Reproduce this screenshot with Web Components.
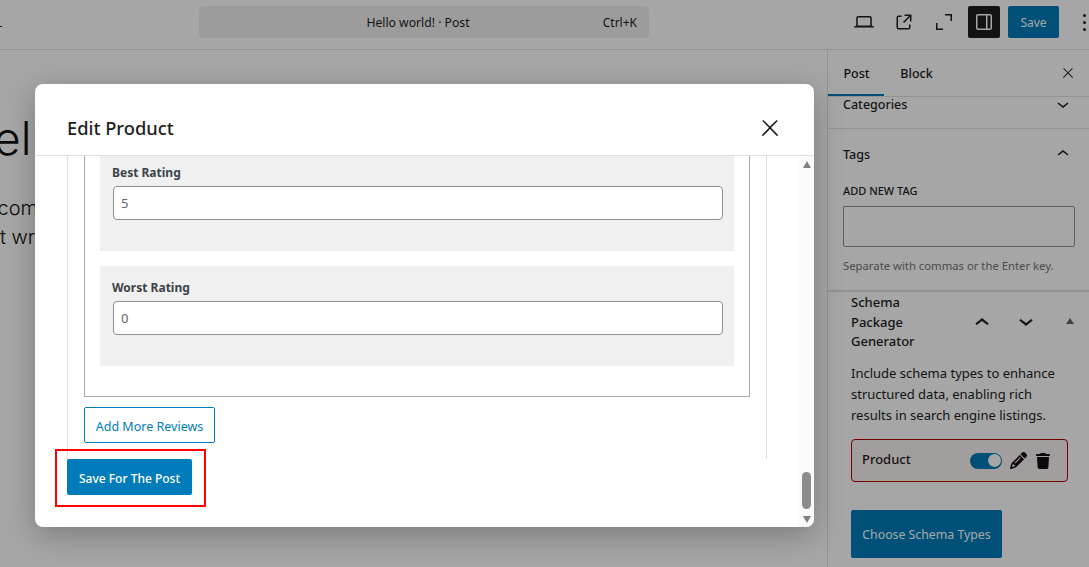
<!DOCTYPE html>
<html>
<head>
<meta charset="utf-8">
<title>Edit Product</title>
<style>
  html, body { margin: 0; padding: 0; height: 100%; overflow: hidden; background: #fff; }
  body { font-family: "Noto Sans", "Open Sans", sans-serif; font-size: 13px; color: #1e1e1e; }
  editor-shell { width: 1089px; height: 567px; }
</style>
</head>
<body>
<editor-shell>
  <editor-topbar slot="top" title-text="Hello world! · Post"></editor-topbar>
  <editor-canvas slot="canvas"></editor-canvas>
  <editor-sidebar slot="side"></editor-sidebar>
  <edit-modal slot="modal" heading="Edit Product">
    <rating-field label="Best Rating" class="first">5</rating-field>
    <rating-field label="Worst Rating">0</rating-field>
  </edit-modal>
</editor-shell>

<script>
const ICONS = {
  laptop: '<path d="M20.5 16h-.7V8c0-1.1-.9-2-2-2H6.2c-1.1 0-2 .9-2 2v8h-.7c-.8 0-1.5.7-1.5 1.5h20c0-.8-.7-1.5-1.5-1.5zM5.7 8c0-.3.2-.5.5-.5h11.6c.3 0 .5.2.5.5v7.6H5.7V8z"/>',
  external: '<path d="M19.5 4.5h-7V6h4.44l-5.97 5.97 1.06 1.06L18 7.06v4.44h1.5v-7Zm-13 1a2 2 0 0 0-2 2v10a2 2 0 0 0 2 2h10a2 2 0 0 0 2-2v-3H17v3a.5.5 0 0 1-.5.5h-10a.5.5 0 0 1-.5-.5v-10a.5.5 0 0 1 .5-.5h3V5.5h-3Z"/>',
  fullscreen: '<path d="M13 5.5h5.5V11H20V4h-7zM11 18.5H5.500V13H4v7h7z"/>',
  sidebar: '<path d="M18 4H6c-1.1 0-2 .9-2 2v12c0 1.1.9 2 2 2h12c1.1 0 2-.9 2-2V6c0-1.100-.9-2-2-2zm-4 14.500H6c-.3 0-.5-.2-.5-.5V6c0-.3.2-.5.5-.5h8v13zm4.500-.5c0 .3-.2.500-.5.500h-2.500v-13H18c.3 0 .5.2.5.5v12z"/>',
  close: '<path d="M13 11.800l6.100-6.300-1-1-6.100 6.200-6.100-6.200-1 1 6.100 6.300-6.500 6.700 1 1 6.500-6.600 6.500 6.600 1-1z"/>',
  up: '<path d="M6.500 12.400L12 8l5.500 4.400-.9 1.200L12 10l-4.500 3.600-1-1.200z"/>',
  down: '<path d="M17.500 11.600L12 16l-5.500-4.400.9-1.200L12 14l4.500-3.600 1 1.200z"/>'
};

function icon(name, size) {
  return `<svg width="${size}" height="${size}" viewBox="0 0 24 24" fill="currentColor" aria-hidden="true">${ICONS[name]}</svg>`;
}

class EditorShell extends HTMLElement {
  constructor() {
    super();
    this.attachShadow({ mode: 'open' }).innerHTML = `
      <style>
        :host { display: grid; grid-template-columns: 827px 262px; grid-template-rows: 50px 517px; position: relative; overflow: hidden; }
        .top { grid-column: 1 / 3; min-width: 0; }
        .scrim { position: absolute; inset: 0; background: rgba(0, 0, 0, .35); padding: 84px 275px 40px 35px; box-sizing: border-box; display: flex; }
      </style>
      <div class="top"><slot name="top"></slot></div>
      <slot name="canvas"></slot>
      <slot name="side"></slot>
      <div class="scrim"><slot name="modal"></slot></div>
    `;
  }
}

class EditorTopbar extends HTMLElement {
  constructor() {
    super();
    const title = this.getAttribute('title-text');
    this.attachShadow({ mode: 'open' }).innerHTML = `
      <style>
        :host { display: flex; align-items: center; height: 50px; box-sizing: border-box; border-bottom: 1px solid #e0e0e0; background: #fff; position: relative; padding-bottom: 5px; }
        .stub { width: 2px; height: 1.500px; background: #1e1e1e; margin: 9px 0 0 0; }
        .command { width: 450px; height: 32px; margin-left: 197px; padding-right: 12px; box-sizing: border-box; background: #f0f0f0; border-radius: 4px; display: grid; grid-template-columns: 1fr auto 1fr; align-items: center; font-size: 12px; color: #1e1e1e; }
        .command span { grid-column: 2; font-size: 12.200px; }
        .command kbd { grid-column: 3; justify-self: end; font: inherit; }
        .tools { display: flex; align-items: center; margin-left: 199px; color: #1e1e1e; }
        .tool { width: 32px; height: 32px; display: flex; align-items: center; justify-content: center; }
        .tool + .tool { margin-left: 8px; }
        .tool.on { background: #1e1e1e; color: #fff; border-radius: 2px; }
        .save { margin-left: 8px; height: 32px; width: 51px; background: #007cba; color: #fff; border-radius: 2px; font-size: 12px; display: flex; align-items: center; justify-content: center; }
        .more { margin-left: 24px; display: flex; flex-direction: column; gap: 4px; }
        .more i { width: 3px; height: 3px; border-radius: 50%; background: #1e1e1e; display: block; }
      </style>
      <div class="stub"></div>
      <div class="command"><span>${title}</span><kbd>Ctrl+K</kbd></div>
      <div class="tools">
        <div class="tool">${icon('laptop', 24)}</div>
        <div class="tool">${icon('external', 24)}</div>
        <div class="tool">${icon('fullscreen', 24)}</div>
        <div class="tool on">${icon('sidebar', 24)}</div>
        <div class="save">Save</div>
        <div class="more"><i></i><i></i><i></i></div>
      </div>
    `;
  }
}

class EditorCanvas extends HTMLElement {
  constructor() {
    super();
    this.attachShadow({ mode: 'open' }).innerHTML = `
      <style>
        :host { display: block; overflow: hidden; background: #fff; white-space: nowrap; font-family: "Inter", "Noto Sans", sans-serif; color: #111; font-weight: 300; }
        h1 { font-size: 46px; font-weight: 300; margin: 58px 0 0 -40px; line-height: 60px; }
        p { font-size: 20px; line-height: 29px; margin: 0 0 0 -37px; }
        p.one { margin-top: 26px; }
        p.two { margin-left: -35px; }
      </style>
      <h1>Hello world!</h1>
      <p class="one">Welcome to WordPress. This is your first post.</p>
      <p class="two">start writing!</p>
    `;
  }
}

class SidebarPanel extends HTMLElement {
  constructor() {
    super();
    const title = this.getAttribute('heading');
    const dir = this.getAttribute('dir-icon') || 'up';
    this.attachShadow({ mode: 'open' }).innerHTML = `
      <style>
        :host { display: block; border-bottom: 1px solid #e0e0e0; box-sizing: border-box; }
        .head { display: flex; justify-content: space-between; align-items: center; height: var(--head-height, 24px); padding: 0 14px 0 15px; font-weight: 500; font-size: 12.500px; }
        svg { display: block; }
        .body { padding: 0 14px 0 15px; }
      </style>
      <div class="head"><span>${title}</span>${icon(dir, 24)}</div>
      <div class="body"><slot></slot></div>
    `;
  }
}

class SchemaCard extends HTMLElement {
  constructor() {
    super();
    this.attachShadow({ mode: 'open' }).innerHTML = `
      <style>
        :host { display: flex; align-items: center; width: 217px; height: 43px; box-sizing: border-box; border: 1px solid #b30000; border-radius: 4px; background: #fbf3f3; padding: 0 0 0 10px; font-size: 13px; font-weight: 500; color: #1e1e1e; }
        .name { flex: 1; margin-top: -4px; }
        .toggle { width: 32px; height: 16px; border-radius: 8px; background: #007cba; display: flex; align-items: center; justify-content: flex-end; padding-right: 1px; box-sizing: border-box; }
        .toggle i { width: 13px; height: 13px; border-radius: 50%; background: #fff; display: block; }
        svg { display: block; }
        .pen { margin-left: 8px; }
        .bin { margin-left: 9px; margin-right: 17px; }
      </style>
      <span class="name"><slot></slot></span>
      <div class="toggle"><i></i></div>
      <svg class="pen" width="17" height="17" viewBox="0 0 512 512" fill="#111"><path d="M410.300 231l11.300-11.300-33.900-33.900-62.100-62.100L291.700 89.800l-11.300 11.300-22.600 22.600L58.600 322.900c-10.400 10.400-18 23.300-22.200 37.400L1 480.700c-2.500 8.400-.2 17.500 6.100 23.700s15.300 8.500 23.700 6.100l120.300-35.400c14.100-4.200 27-11.800 37.400-22.200L387.700 253.700 410.300 231zM160 399.400l-9.100 22.700c-4 3.100-8.500 5.400-13.300 6.900L59.400 452l23-78.100c1.400-4.900 3.800-9.400 6.900-13.300l22.700-9.100v32c0 8.800 7.200 16 16 16h32zM362.700 18.700L348.300 33.200 325.700 55.800 314.300 67.100l33.900 33.900 62.100 62.100 33.900 33.900 11.300-11.300 22.600-22.600 14.500-14.500c25-25 25-65.500 0-90.500L453.300 18.700c-25-25-65.500-25-90.500 0zm-47.400 168l-144 144c-6.200 6.200-16.400 6.200-22.600 0s-6.200-16.400 0-22.600l144-144c6.200-6.200 16.400-6.200 22.600 0s6.200 16.400 0 22.600z"/></svg>
      <svg class="bin" width="14" height="16" viewBox="0 0 448 512" fill="#111"><path d="M135.200 17.700L128 32H32C14.300 32 0 46.300 0 64S14.300 96 32 96H416c17.700 0 32-14.300 32-32s-14.300-32-32-32H320l-7.200-14.300C307.400 6.800 296.300 0 284.200 0H163.800c-12.100 0-23.200 6.800-28.600 17.700zM416 128H32L53.200 467c1.600 25.300 22.600 45 47.900 45H346.900c25.300 0 46.300-19.700 47.900-45L416 128z"/></svg>
    `;
  }
}

class EditorSidebar extends HTMLElement {
  constructor() {
    super();
    this.attachShadow({ mode: 'open' }).innerHTML = `
      <style>
        :host { display: block; border-left: 1px solid #e0e0e0; background: #fff; overflow: hidden; box-sizing: border-box; }
        .tabs { display: flex; height: 47px; border-bottom: 1px solid #e0e0e0; box-sizing: border-box; font-size: 12.500px; font-weight: 500; align-items: center; margin-left: -1px; }
        .tab { width: 57px; height: 46px; box-sizing: border-box; padding-left: 2px; display: flex; align-items: center; justify-content: center; }
        .tab + .tab { margin-left: 3px; }
        .tab.on { box-shadow: inset 0 -2px 0 #007cba; }
        .x { margin-left: auto; margin-right: 13px; display: block; height: 16px; }
        .cats { height: 32px; --head-height: 14px; }
        .tags { height: 163px; padding-top: 13px; border-bottom: 2px solid #e0e0e0; }
        .label { font-size: 11px; font-weight: 500; text-transform: uppercase; margin-top: 17px; line-height: 16px; }
        .input { width: 232px; height: 41px; box-sizing: border-box; border: 1px solid #949494; border-radius: 2px; margin-top: 7px; background: #fff; }
        .help { font-size: 11.300px; color: #757575; margin-top: 10px; line-height: 18px; white-space: nowrap; }
        .schema { padding: 0 0 0 23px; }
        .schema-head { display: flex; align-items: center; height: 58.500px; }
        .schema-head h2 { margin: 2px 0 0; font-size: 13px; font-weight: 500; line-height: 19.500px; width: 90px; flex: none; }
        .schema-head svg { display: block; }
        .schema-head .u { margin: 4px 0 0 27px; }
        .schema-head .d { margin: 0 0 1px 16px; }
        .tri { width: 0; height: 0; border-left: 4px solid transparent; border-right: 4px solid transparent; border-bottom: 6px solid #666; margin-left: 26px; }
        .desc { font-size: 13px; line-height: 21px; margin: 12px 0 13.500px; width: 225px; }
        .choose { width: 151px; height: 48px; background: #007cba; color: #fff; border-radius: 2px; margin-top: 28px; display: flex; align-items: center; justify-content: center; font-size: 12.300px; }
      </style>
      <div class="tabs">
        <div class="tab on">Post</div>
        <div class="tab">Block</div>
        <span class="x">${icon('close', 16)}</span>
      </div>
      <sidebar-panel class="cats" heading="Categories" dir-icon="down"></sidebar-panel>
      <sidebar-panel class="tags" heading="Tags">
        <div class="label">Add new tag</div>
        <div class="input"></div>
        <div class="help">Separate with commas or the Enter key.</div>
      </sidebar-panel>
      <div class="schema">
        <div class="schema-head">
          <h2>Schema Package Generator</h2>
          <span class="u"><svg width="28" height="28" viewBox="0 0 24 24" fill="#1e1e1e" stroke="#1e1e1e" stroke-width=".4">${ICONS.up}</svg></span>
          <span class="d"><svg width="28" height="28" viewBox="0 0 24 24" fill="#1e1e1e" stroke="#1e1e1e" stroke-width=".4">${ICONS.down}</svg></span>
          <span class="tri"></span>
        </div>
        <div class="desc">Include schema types to enhance structured data, enabling rich results in search engine listings.</div>
        <schema-card>Product</schema-card>
        <div class="choose">Choose Schema Types</div>
      </div>
    `;
  }
}

class RatingField extends HTMLElement {
  constructor() {
    super();
    const label = this.getAttribute('label');
    this.attachShadow({ mode: 'open' }).innerHTML = `
      <style>
        :host { display: block; background: #f0f0f0; height: 100px; box-sizing: border-box; padding: 14px 11px 0 12px; color: #3c434a; }
        :host(.first) { margin-top: -5px; }
        label { display: block; font-size: 12px; font-weight: 700; line-height: 16px; margin-bottom: 5px; }
        .box { height: 34px; margin-left: 1px; box-sizing: border-box; border: 1px solid #8c8f94; border-radius: 4px; background: #fff; font-size: 13px; color: #646970; padding: 0 7px; display: flex; align-items: center; }
      </style>
      <label>${label}</label>
      <div class="box"><slot></slot></div>
    `;
  }
}

class EditModal extends HTMLElement {
  constructor() {
    super();
    const heading = this.getAttribute('heading');
    this.attachShadow({ mode: 'open' }).innerHTML = `
      <style>
        :host { display: flex; flex-direction: column; flex: 1; background: #fff; border-radius: 8px; overflow: hidden; box-shadow: 0 8px 30px rgba(0,0,0,.25); min-width: 0; }
        header { height: 72px; box-sizing: border-box; border-bottom: 1px solid #e0e0e0; display: flex; align-items: center; justify-content: space-between; padding: 16px 31px 0 32px; flex: none; }
        h1 { margin: 0; font-size: 18.300px; font-weight: 500; color: #1e1e1e; }
        header svg { display: block; }
        .main { flex: 1; display: flex; min-height: 0; }
        .scroll { flex: 1; min-width: 0; padding-left: 32px; overflow: hidden; }
        .outer { width: 700px; height: 303px; box-sizing: border-box; border-left: 1px solid #ddd; border-right: 1px solid #ddd; padding: 0 16px; }
        .inner { width: 666px; height: 241px; box-sizing: border-box; border: 1px solid #aaa; border-top: 0; padding: 0 15px; display: flex; flex-direction: column; gap: 15px; overflow: hidden; }
        .add { margin-top: 10px; width: 131px; height: 36px; box-sizing: border-box; padding-top: 2px; border: 1px solid #007cba; border-radius: 2px; color: #007cba; font-size: 12.500px; display: flex; align-items: center; justify-content: center; }
        .mark { width: 151px; height: 58px; box-sizing: border-box; border: 2px solid #f00; margin: -10px 0 0 -12px; padding: 8px 0 0 10px; }
        .save { width: 125px; height: 36px; padding-top: 2px; box-sizing: border-box; background: #007cba; color: #fff; border-radius: 2px; font-size: 12px; font-weight: 500; display: flex; align-items: center; justify-content: center; }
        .bar { width: 15px; flex: none; background: #fafafa; display: flex; flex-direction: column; align-items: center; padding: 0 2px; box-sizing: border-box; }
        .ar { width: 0; height: 0; border-left: 4.500px solid transparent; border-right: 4.500px solid transparent; }
        .ar.u { border-bottom: 7px solid #7f7f7f; margin-top: 5px; }
        .thumb { width: 9px; height: 37px; background: #8c8c8c; border-radius: 5px; margin-top: auto; }
        .ar.d { border-top: 7px solid #7f7f7f; margin: 7px 0 4px; }
      </style>
      <header><h1>${heading}</h1>${icon('close', 26)}</header>
      <div class="main">
        <div class="scroll">
          <div class="outer">
            <div class="inner"><slot></slot></div>
            <div class="add">Add More Reviews</div>
          </div>
          <div class="mark"><div class="save">Save For The Post</div></div>
        </div>
        <div class="bar"><span class="ar u"></span><span class="thumb"></span><span class="ar d"></span></div>
      </div>
    `;
  }
}

customElements.define('sidebar-panel', SidebarPanel);
customElements.define('schema-card', SchemaCard);
customElements.define('rating-field', RatingField);
customElements.define('editor-topbar', EditorTopbar);
customElements.define('editor-canvas', EditorCanvas);
customElements.define('editor-sidebar', EditorSidebar);
customElements.define('edit-modal', EditModal);
customElements.define('editor-shell', EditorShell);
</script>
</body>
</html>
